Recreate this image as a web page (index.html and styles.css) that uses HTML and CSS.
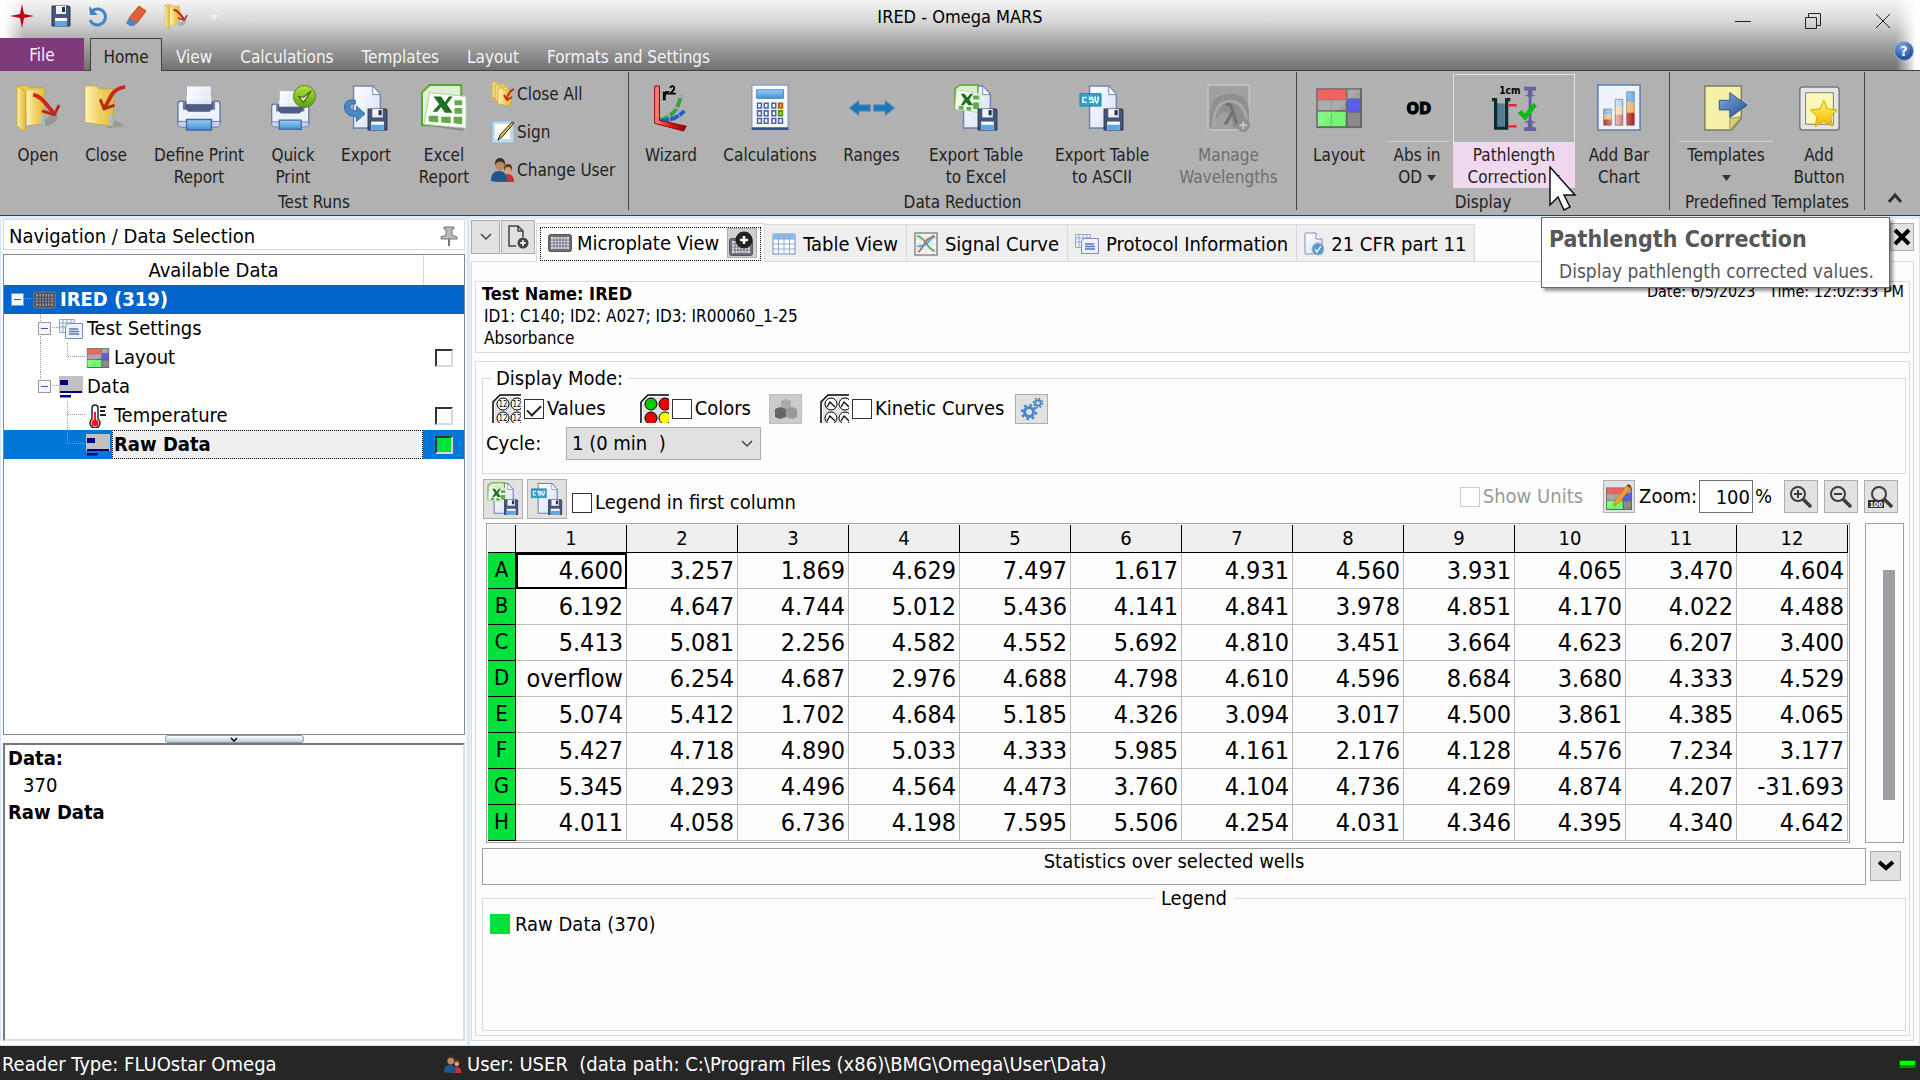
FILE: index.html
```html
<!DOCTYPE html>
<html lang="en">
<head>
<meta charset="utf-8">
<title>IRED - Omega MARS</title>
<link rel="stylesheet" href="styles.css">
</head>
<body>
<svg class="defs" aria-hidden="true">
  <defs>
    <linearGradient id="gFold" x1="0" y1="0" x2="1" y2="0"><stop offset="0" stop-color="#fff3b4"/><stop offset=".5" stop-color="#f0d268"/><stop offset="1" stop-color="#e3bd3c"/></linearGradient>
    <linearGradient id="gPaper" x1="0" y1="0" x2="1" y2="1"><stop offset="0" stop-color="#ffffff"/><stop offset="1" stop-color="#d5def0"/></linearGradient>
    <linearGradient id="gBlue" x1="0" y1="0" x2="0" y2="1"><stop offset="0" stop-color="#9fd0f4"/><stop offset="1" stop-color="#3f8fd6"/></linearGradient>
    <linearGradient id="gGreen" x1="0" y1="0" x2="0" y2="1"><stop offset="0" stop-color="#b5e33a"/><stop offset="1" stop-color="#5c9e10"/></linearGradient>
    <linearGradient id="gRed" x1="0" y1="0" x2="1" y2="0"><stop offset="0" stop-color="#ff8a80"/><stop offset=".5" stop-color="#e01818"/><stop offset="1" stop-color="#8a0505"/></linearGradient>
    <linearGradient id="gYel" x1="0" y1="0" x2="0" y2="1"><stop offset="0" stop-color="#fff26a"/><stop offset="1" stop-color="#f5b800"/></linearGradient>
    <linearGradient id="gArrow" x1="0" y1="0" x2="1" y2="1"><stop offset="0" stop-color="#7fb0e4"/><stop offset="1" stop-color="#234f8c"/></linearGradient>
    <linearGradient id="gBar" x1="0" y1="0" x2="1" y2="0"><stop offset="0" stop-color="#fff" stop-opacity=".1"/><stop offset=".4" stop-color="#fff" stop-opacity=".7"/><stop offset="1" stop-color="#fff" stop-opacity="0"/></linearGradient>
    <radialGradient id="gHelp" cx=".4" cy=".25" r=".8"><stop offset="0" stop-color="#7fa6e0"/><stop offset="1" stop-color="#123f8c"/></radialGradient>
    <symbol id="disk" viewBox="0 0 20 22"><path d="M1 1h17l1 1v19H1z" fill="#45557c" stroke="#28344f"/><path d="M5 1h10v8H5z" fill="#f0f3fa"/><path d="M11 2h3v5h-3z" fill="#28344f"/><path d="M4 13h12v8H4z" fill="#fff"/><path d="M4 16h12v5H4z" fill="#5aa7e4"/></symbol>
    <symbol id="openF" viewBox="0 0 48 50"><path d="M32 44c8-1 12-6 13-12l-6-2-8 8z" fill="#666" opacity=".35"/><path d="M2 2l11-1 3 3h15v37l-15 2z" fill="#e9c84f" stroke="#b8952e" stroke-opacity=".6"/><path d="M12 7l18-2v36l-18 2z" fill="url(#gFold)"/><path d="M2 2l9 6v40l-3 1-6-6z" fill="url(#gFold)" stroke="#c9a638"/><path d="M28 33l3-1v10l-3 1z" fill="#8ec4f0"/><path d="M19 11q7 2 12 8l9 11" fill="none" stroke="#c8271c" stroke-width="4"/><path d="M28 28l13 4 5-10" fill="none" stroke="#b02c20" stroke-width="3"/></symbol>
    <symbol id="closeF" viewBox="0 0 48 50"><path d="M24 46l20-2-10-6z" fill="#666" opacity=".35"/><path d="M2 2h12l3 3h15v17l-1 22L2 40z" fill="url(#gFold)" stroke="#b8952e" stroke-opacity=".6"/><path d="M28 32l3 1v10l-3-1z" fill="#8ec4f0"/><path d="M44 3q-9 1-14 8l-7 13" fill="none" stroke="#c8271c" stroke-width="4"/><path d="M18 16l4 10 11-4" fill="none" stroke="#b02c20" stroke-width="3"/></symbol>
    <symbol id="printer" viewBox="0 0 48 48"><path d="M11 1h26v24H11z" fill="url(#gPaper)" stroke="#9dabc9"/><path d="M2 20q0-3 3-3h3v8h32v-8h3q3 0 3 3v20H2z" fill="#eef2fa" stroke="#6478a8" stroke-width="1.5"/><path d="M9 17h30v7l-4 4H13l-4-4z" fill="#4c5c84"/><path d="M11 12h26v8H11z" fill="url(#gPaper)"/><path d="M2 38h44v3q0 3-3 3H5q-3 0-3-3z" fill="#c9d3e8" stroke="#6478a8"/><path d="M11 36h26v11H11z" fill="url(#gBlue)" stroke="#4169a8" stroke-width="1.5"/></symbol>
    <symbol id="qprint" viewBox="0 0 48 50"><g transform="translate(0 6) scale(.88)"><use href="#printer" width="48" height="48"/></g><circle cx="36" cy="13" r="11.5" fill="url(#gGreen)" stroke="#4d8510"/><path d="M30 13l5 6 8-12-8 7z" fill="#fff" stroke="#39600c" stroke-width="1.2"/></symbol>
    <symbol id="doc" viewBox="0 0 30 46"><path d="M1 1h20l8 9v35H1z" fill="url(#gPaper)" stroke="#7285b5" stroke-width="1.6"/><path d="M21 1v9h8z" fill="#fff" stroke="#7285b5"/></symbol>
    <symbol id="export" viewBox="0 0 48 50"><use href="#doc" x="8" y="1" width="34" height="46"/><path d="M13 17c-9-2-13 4-11 10 1 5 7 7 12 7v5l9-8-9-8v5c-5 0-7-2-7-5 0-2 2-3 6-2z" fill="#4a8ac4" stroke="#2e689f"/><use href="#disk" x="25" y="25" width="22" height="24"/></symbol>
    <symbol id="excel" viewBox="0 0 48 50"><path d="M10 44l34 5 2-6z" fill="#555" opacity=".4"/><path d="M9 1h33v42H1V9z" fill="#dff0d6" stroke="#58a528" stroke-width="2"/><path d="M9 9l38 4v33L3 42z" fill="#fff" stroke="#a8cf9a"/><path d="M13 13h8l4 6 4-6h4l-6 8 6 9h-8l-4-6-4 5h-5l7-8z" fill="#207020"/><path d="M35 17h8v5h-8zM35 25h8v6h-8zM34 34h9v8l-9-1zM21 34h10v7l-10-1zM8 33h10v7l-10-1z" fill="#63aa4c"/></symbol>
    <symbol id="closeAll" viewBox="0 0 24 26"><path d="M1 1h5l1 2h7v15l-13-1z" fill="#f3dc86" stroke="#cfae4a"/><path d="M4 4h5l1 2h7v15l-13-1z" fill="#f3dc86" stroke="#cfae4a"/><path d="M7 7h5l1 2h7v16l-13-2z" fill="url(#gFold)" stroke="#cfae4a"/><path d="M23 8q-5 2-7 9M13 14l3 5 5-3" fill="none" stroke="#c8271c" stroke-width="2"/></symbol>
    <symbol id="sign" viewBox="0 0 24 24"><path d="M1 1h22v22H1z" fill="#c4d8e6" stroke="#8eb4cf"/><path d="M4 4h15v15H4z" fill="#fff"/><path d="M21 2L9 15l-2 5 4-3L23 3z" fill="#e9c23c" stroke="#222"/></symbol>
    <symbol id="users" viewBox="0 0 24 26"><circle cx="17" cy="11" r="4" fill="#6b3a1c"/><circle cx="17" cy="13" r="3" fill="#d9a075"/><path d="M12 25c0-6 2-8 5-8s6 2 6 8z" fill="#d02c3c"/><circle cx="9" cy="6" r="5" fill="#3c2a20"/><circle cx="9" cy="9" r="4.5" fill="#b88a62"/><path d="M0 24c0-7 3-10 8-10s8 3 8 10q-8 2-16 0z" fill="#1d5687"/></symbol>
    <symbol id="wizard" viewBox="0 0 48 50"><path d="M12 38c14-4 20-12 22-26" fill="none" stroke="#30a53e" stroke-width="4" stroke-dasharray="10 2"/><path d="M12 38c12 1 20-4 26-10" fill="none" stroke="#1f5fd0" stroke-width="4" stroke-dasharray="10 1"/><path d="M7 2h5v36l28 6-3 5L7 41z" fill="url(#gRed)" stroke="#8a0505"/><path d="M17 17V8m0 4q1-4 5-3" fill="none" stroke="#000" stroke-width="3"/><path d="M23 4q2-3 4-1 2 2-4 7h6" fill="none" stroke="#000" stroke-width="1.8"/></symbol>
    <symbol id="calc" viewBox="0 0 48 50"><path d="M5 1h38v46H5z" fill="#f7f9fd" stroke="#8d9cc4" stroke-width="1.5"/><path d="M5 45h38v3H5z" fill="#34508f"/><path d="M10 6h28v9H10z" fill="url(#gBlue)" stroke="#4b86c0"/><g fill="#fff" stroke="#4d64a4" stroke-width="1.6"><path d="M11 20h4v5h-4zM18 20h4v5h-4zM26 20h4v5h-4zM11 28h4v5h-4zM18 28h4v5h-4zM26 28h4v5h-4zM11 36h4v5h-4zM18 36h4v5h-4zM26 36h4v5h-4zM33 36h4v5h-4z"/></g><path d="M33 20h4v5h-4z" fill="#e89a2c" stroke="#a85a08" stroke-width="1.6"/><path d="M33 28h4v5h-4z" fill="#9fd62c" stroke="#4f8a08" stroke-width="1.6"/></symbol>
    <symbol id="ranges" viewBox="0 0 48 50"><path d="M1 25l9-7v4h12v6H10v4zM47 25l-9-7v4H26v6h12v4z" fill="#1478c0" stroke="#4a7da3" stroke-width="1.2"/></symbol>
    <symbol id="xlsDisk" viewBox="0 0 48 50"><use href="#doc" x="8" y="1" width="34" height="46"/><path d="M2 5l5-4h19v26L2 26z" fill="#d8efcb" stroke="#58a528" stroke-width="1.5"/><path d="M4 6l24 4v20L2 26z" fill="#f4fbef" stroke="#c4e0b8"/><path d="M8 10h4l3 4 3-4h3l-4 6 4 6h-5l-2-3-3 3H8l4-6z" fill="#207020"/><path d="M21 12h6v4h-6zM21 19h6v7h-6zM14 24h5v4l-5-1zM6 23h5v4l-5-1z" fill="#63aa4c"/><use href="#disk" x="25" y="25" width="22" height="24"/></symbol>
    <symbol id="csvDisk" viewBox="0 0 48 50"><use href="#doc" x="8" y="1" width="34" height="46"/><path d="M1 10h22v13H1z" fill="#2fa3c8" stroke="#1c86aa"/><path d="M8 14H4v5h4M15 14h-4v2h4v3h-4M17 13v4l1.500 2.500L20 17v-4" fill="none" stroke="#fff" stroke-width="1.500"/><use href="#disk" x="25" y="25" width="22" height="24"/></symbol>
    <symbol id="waves" viewBox="0 0 48 50"><path d="M2 1h43v47H2z" fill="#a0a0a0" stroke="#bdbdbd" stroke-width="2"/><path d="M4 30Q6 10 26 10t19 24v12H28C26 26 18 22 4 46z" fill="#909090"/><path d="M8 44Q8 18 25 18t18 26" fill="none" stroke="#a8a8a8" stroke-width="3"/><path d="M21 22q5-3 6 4l5 15q1 3 3 0M28 29l-8 13" fill="none" stroke="#707070" stroke-width="3"/><circle cx="39" cy="43" r="7" fill="#8f8f8f"/><path d="M39 39v8m-4-4h8" stroke="#c8c8c8" stroke-width="2"/></symbol>
    <symbol id="plate" viewBox="0 0 48 42"><path d="M0 0h48v42H0z" fill="#666"/><path d="M2 2h29v10H2z" fill="#f94a4a"/><path d="M2 13h29v10H2z" fill="#a0a0a0"/><path d="M2 25h29v15H2z" fill="#76f476"/><path d="M33 2h13v9H33z" fill="#a0a0a0"/><path d="M33 12h13v12H33z" fill="#5c5cf2"/><path d="M33 26h13v14H33z" fill="#8a8a8a"/><path d="M16 2v38" stroke="#777" stroke-opacity=".5"/><path d="M0 0h48L0 42z" fill="#fff" opacity=".12"/></symbol>
    <symbol id="pathlen" viewBox="0 0 50 50"><path d="M5 20h10v27H5z" fill="#567a94"/><path d="M1 16h4v31h12V16h4" fill="none" stroke="#06302f" stroke-width="3.500"/><path d="M19 22h9M19 45h9" stroke="#ff1c2c" stroke-width="2.500"/><path d="M36 2h13v4h-4v5h4L43 13h-2l-5-2h4V6h-4zM41 12h3v26h-3zM36 50h13v-4h-4v-5h4l-6-3h-2l-5 3h4v5h-4z" fill="#62629c"/><path d="M31 29l6 6 11-14" fill="none" stroke="#0eb80e" stroke-width="5"/></symbol>
    <symbol id="bars" viewBox="0 0 48 50"><path d="M2 1h44v47H2z" fill="#eff3fb" stroke="#5f7bb4" stroke-width="1.600"/><path d="M8 26h8v6H8zM20 16h8v8h-8zM32 8h8v11h-8z" fill="#6aaee0"/><path d="M8 32h8v6H8zM20 24h8v9h-8zM32 19h8v12h-8z" fill="#f0b05a"/><path d="M8 37h8v6H8zM20 32h8v11h-8zM32 30h8v13h-8z" fill="#b81e10"/><path d="M8 26h8v17H8zM20 16h8v27h-8zM32 8h8v35h-8z" fill="url(#gBar)" stroke="#555" stroke-opacity=".5"/></symbol>
    <symbol id="tmpl" viewBox="0 0 48 50"><path d="M2 2h38v34l-10 12H2z" fill="#f4f0a8" stroke="#7c7c66" stroke-width="1.500"/><path d="M40 34l-12 2 0 12z" fill="#d8d078" stroke="#9a965a"/><path d="M17 17h11V9l18 13-18 13v-8H17z" fill="url(#gArrow)" stroke="#2d5184"/></symbol>
    <symbol id="addBtn" viewBox="0 0 48 50"><rect x="4" y="3" width="41" height="45" rx="3" fill="#e6e6e6" stroke="#777" stroke-width="1.500"/><path d="M10 9h29v33H10z" fill="#fbf7b4" stroke="#777"/><path d="M29 17l4 9 10 1-7 7 2 10-9-5-9 5 2-10-7-7 10-1z" fill="url(#gYel)" stroke="#dfa000"/></symbol>
    <symbol id="grid" viewBox="0 0 24 18"><rect x=".5" y=".5" width="23" height="17" rx="2" fill="#55565e" stroke="#77787c"/><path d="M3 3h18v12H3z" fill="#8f93a8"/><path d="M6 3v12M9 3v12M12 3v12M15 3v12M18 3v12M3 6h18M3 9h18M3 12h18" stroke="#3e3f48"/></symbol>
    <symbol id="gridL" viewBox="0 0 24 18"><rect x=".5" y=".5" width="23" height="17" rx="2" fill="#6d6d75" stroke="#55555a"/><path d="M3 3h18v12H3z" fill="#dfe0ea"/><path d="M6 3v12M9 3v12M12 3v12M15 3v12M18 3v12M3 6h18M3 9h18M3 12h18" stroke="#70707c"/></symbol>
    <symbol id="proto" viewBox="0 0 24 20"><path d="M.5.500h15v13H.500z" fill="#f4f6fc" stroke="#9aa5cc"/><path d="M4 0v13M8 0v13M12 0v13M0 4h15M0 8h15" stroke="#9aa5cc"/><path d="M6.500 6.500l3-2h14v15h-17z" fill="#eef2fb" stroke="#7c8bbc"/><path d="M10 10h9M10 12.500h10M10 15h10" stroke="#5a74b8" stroke-width="1.500"/></symbol>
    <symbol id="dataI" viewBox="0 0 24 22"><path d="M0 0h24v17H0z" fill="#c0c0c0"/><path d="M1 4h8v5H1zM1 15h22v2H1zM1 19h11v2.500H1z" fill="#00007c"/></symbol>
    <symbol id="thermo" viewBox="0 0 18 24"><path d="M3 4a3 3 0 0 1 6 0v11a5 5 0 1 1-6 0z" fill="#fff" stroke="#222" stroke-width="1.500"/><path d="M6 8v10" stroke="#f01818" stroke-width="2"/><circle cx="6" cy="19" r="3.500" fill="#f01818"/><path d="M11 3h6M11 7h5M11 11h6" stroke="#222" stroke-width="2"/></symbol>
    <symbol id="tableI" viewBox="0 0 24 22"><path d="M1 1h22v20H1z" fill="#fff" stroke="#6b8fc4"/><path d="M1 1h22v5H1z" fill="#86bfe8"/><path d="M6.500 1v20M12 1v20M17.500 1v20M1 6h22M1 11h22M1 16h22" stroke="#8fa8d4"/></symbol>
    <symbol id="curve" viewBox="0 0 24 24"><path d="M1 1h22v22H1z" fill="#f6f6f6" stroke="#8a8a8a" stroke-width="1.500"/><path d="M6 2v20M12 2v20M18 2v20M2 7h20M2 12h20M2 17h20" stroke="#ddd"/><path d="M3 4c8 0 10 14 18 15" fill="none" stroke="#5bb55b" stroke-width="1.800"/><path d="M4 20C10 18 10 4 21 5" fill="none" stroke="#e05050" stroke-width="1.800"/><path d="M3 14c8 2 12-4 17-11" fill="none" stroke="#4a9cd8" stroke-width="1.800"/></symbol>
    <symbol id="docOk" viewBox="0 0 20 24"><path d="M1 1h11l6 6v15H1z" fill="url(#gPaper)" stroke="#8592b8"/><path d="M12 1v6h6" fill="#fff" stroke="#8592b8"/><circle cx="14" cy="17" r="6" fill="#5a9ac8" stroke="#9bb8cc"/><path d="M11 17l2 3 4-6" fill="none" stroke="#fff" stroke-width="1.300"/></symbol>
    <symbol id="wellBase" viewBox="0 0 29 29"><path d="M1 29V8l7-7h21" fill="none" stroke="#000" stroke-width="1.500"/><path d="M3 29V9l6-6h20v26z" fill="#e2e2e2"/></symbol>
    <symbol id="undo" viewBox="0 0 20 22"><path d="M4 6a8 8 0 1 1-2 9" fill="none" stroke="#3f86c6" stroke-width="3"/><path d="M1 1l1 9h8z" fill="#3f86c6"/></symbol>
    <symbol id="mag" viewBox="0 0 24 24"><circle cx="9" cy="9" r="7" fill="none" stroke="#3e3e3e" stroke-width="2"/><path d="M14 14l8 8" stroke="#3e3e3e" stroke-width="3.500"/></symbol>
  </defs>
</svg>

<div class="app">
  <header class="chrome">
    <div class="titlebar">
      <div class="quick">
        <svg width="24" height="24" viewBox="0 0 24 24"><path d="M12 0l2 10 10 2-10 2-2 10-2-10-10-2 10-2z" fill="#c00010"/></svg>
        <button aria-label="Save"><svg width="20" height="22"><use href="#disk"/></svg></button>
        <button aria-label="Undo"><svg width="20" height="22"><use href="#undo"/></svg></button>
        <button aria-label="Clear"><svg width="22" height="22" viewBox="0 0 22 22"><path d="M14 1l7 5-9 12-8-5z" fill="#e0603c" stroke="#c44a28"/><path d="M4 13l8 5-3 3H5l-4-3z" fill="#4d86c0"/></svg></button>
        <button aria-label="Open"><svg width="24" height="25"><use href="#openF"/></svg></button>
        <button aria-label="Customize" class="quick-more"><svg width="10" height="12" viewBox="0 0 10 12"><path d="M0 1h10M1 5h8l-4 5z" fill="#eee" stroke="#eee"/></svg></button>
      </div>
      <h1 class="title">IRED - Omega MARS</h1>
      <div class="win">
        <button aria-label="Minimize"><svg width="16" height="16"><path d="M0 8.500h16" stroke="#222"/></svg></button>
        <button aria-label="Restore"><svg width="16" height="16"><path d="M.5 4.500h11v11H.500zM3.500 4V.500h12v12H12" fill="none" stroke="#222"/></svg></button>
        <button aria-label="Close window"><svg width="16" height="16"><path d="M1 1l14 14M15 1L1 15" stroke="#222"/></svg></button>
      </div>
    </div>
    <nav class="menu">
      <button class="file">File</button>
      <button class="active">Home</button>
      <button>View</button>
      <button>Calculations</button>
      <button>Templates</button>
      <button>Layout</button>
      <button>Formats and Settings</button>
      <button class="help" aria-label="Help"><svg width="20" height="20" viewBox="0 0 20 20"><circle cx="10" cy="10" r="9.500" fill="url(#gHelp)" stroke="#9ab4dc"/><text x="10" y="15" text-anchor="middle" font-size="14" font-weight="bold" fill="#fff">?</text></svg></button>
    </nav>
  </header>

  <section class="ribbon" aria-label="Home">
    <div class="group runs">
      <div class="items">
        <button class="big"><svg><use href="#openF"/></svg>Open</button>
        <button class="big"><svg><use href="#closeF"/></svg>Close</button>
        <button class="big"><svg><use href="#printer"/></svg>Define Print<br>Report</button>
        <button class="big"><svg><use href="#qprint"/></svg>Quick<br>Print</button>
        <button class="big"><svg><use href="#export"/></svg>Export</button>
        <button class="big"><svg><use href="#excel"/></svg>Excel<br>Report</button>
        <div class="smalls">
          <button><svg><use href="#closeAll"/></svg>Close All</button>
          <button><svg><use href="#sign"/></svg>Sign</button>
          <button><svg><use href="#users"/></svg>Change User</button>
        </div>
      </div>
      <h2>Test Runs</h2>
    </div>
    <div class="group reduction">
      <div class="items">
        <button class="big"><svg><use href="#wizard"/></svg>Wizard</button>
        <button class="big"><svg><use href="#calc"/></svg>Calculations</button>
        <button class="big"><svg><use href="#ranges"/></svg>Ranges</button>
        <button class="big"><svg><use href="#xlsDisk"/></svg>Export Table<br>to Excel</button>
        <button class="big"><svg><use href="#csvDisk"/></svg>Export Table<br>to ASCII</button>
        <button class="big" disabled><svg><use href="#waves"/></svg>Manage<br>Wavelengths</button>
      </div>
      <h2>Data Reduction</h2>
    </div>
    <div class="group display">
      <div class="items">
        <button class="big"><svg viewBox="0 0 48 50"><use href="#plate" y="4" width="48" height="42"/></svg>Layout</button>
        <button class="big split"><svg viewBox="0 0 48 50"><text x="26" y="31" text-anchor="middle" font-size="17" font-weight="bold" stroke="#000" stroke-width="1">OD</text></svg>Abs in<br><span>OD <svg class="drop" viewBox="0 0 9 6"><path d="M0 0h9L4.500 6z"/></svg></span></button>
        <div class="hover-wrap">
          <button class="big hot" aria-describedby="tip"><svg viewBox="0 0 50 50"><use href="#pathlen"/><text x="9" y="10" font-size="11" font-weight="bold">1cm</text></svg><span class="hot-label">Pathlength<br>Correction <svg class="drop" viewBox="0 0 9 6"><path d="M0 0h9L4.500 6z"/></svg></span></button>
          <div class="tip" role="tooltip" id="tip"><strong>Pathlength Correction</strong><p>Display pathlength corrected values.</p></div>
          <svg class="cursor" width="28" height="46" viewBox="0 0 28 46"><path d="M1 1v38l8-8 6 13 6-3-6-12h11z" fill="#fff" stroke="#111" stroke-width="1.500"/></svg>
        </div>
        <button class="big"><svg><use href="#bars"/></svg>Add Bar<br>Chart</button>
      </div>
      <h2>Display</h2>
    </div>
    <div class="group predefined">
      <div class="items">
        <button class="big split"><svg><use href="#tmpl"/></svg>Templates<br><span><svg class="drop" viewBox="0 0 9 6"><path d="M0 0h9L4.500 6z"/></svg></span></button>
        <button class="big"><svg><use href="#addBtn"/></svg>Add<br>Button</button>
      </div>
      <h2>Predefined Templates</h2>
    </div>
    <button class="collapse" aria-label="Collapse ribbon"><svg width="14" height="12"><path d="M1 10l6-7 6 7" fill="none" stroke="#333" stroke-width="3"/></svg></button>
  </section>

  <main class="work">
    <aside class="side">
      <div class="side-head"><h2>Navigation / Data Selection</h2><button aria-label="Pin"><svg width="18" height="20" viewBox="0 0 18 20"><path d="M4 1h10v2h-2v6l5 2v2H1v-2l5-2V3H4z" fill="#bbb" stroke="#777"/><path d="M9 13v7" stroke="#777" stroke-width="2"/></svg></button></div>
      <div class="tree">
        <div class="tree-cols"><span>Available Data</span><i></i></div>
        <div class="node root"><button class="twig w1" aria-label="Collapse IRED"><svg width="29" height="29"><path d="M21 13.500h8" class="dots"/><path d="M7.500 8.500h12v12h-12z" class="box"/><path d="M10 14.500h7" class="minus"/></svg></button><svg width="23" height="18"><use href="#grid"/></svg><span class="label">IRED (319)</span></div>
        <div class="node"><button class="twig w2" aria-label="Collapse Test Settings"><svg width="55" height="29"><path d="M36.500 0v29M48 13.500h7" class="dots"/><path d="M34.500 8.500h12v12h-12z" class="box"/><path d="M37 14.500h7" class="minus"/></svg></button><svg width="24" height="20"><use href="#proto"/></svg><span class="label">Test Settings</span></div>
        <div class="node"><svg width="82" height="29"><path d="M36.500 0v29M63.500 0v13.500h18" class="dots"/></svg><svg width="24" height="20" viewBox="0 0 48 42"><use href="#plate"/></svg><label class="label" for="n1">Layout</label><span class="tick"><input type="checkbox" id="n1"></span></div>
        <div class="node"><button class="twig w2" aria-label="Collapse Data"><svg width="55" height="29"><path d="M36.500 0v8M48 13.500h7" class="dots"/><path d="M34.500 8.500h12v12h-12z" class="box"/><path d="M37 14.500h7" class="minus"/></svg></button><svg width="24" height="22"><use href="#dataI"/></svg><span class="label">Data</span></div>
        <div class="node"><svg width="82" height="29"><path d="M63.500 0v29M64 13.500h18" class="dots"/></svg><svg width="24" height="24"><use href="#thermo"/></svg><label class="label" for="n2">Temperature</label><span class="tick"><input type="checkbox" id="n2"></span></div>
        <div class="node current"><svg width="82" height="29"><path d="M63.500 0v13.500h18" class="dots"/></svg><svg width="24" height="22"><use href="#dataI"/></svg><label class="label" for="n3">Raw Data</label><span class="tick"><input type="checkbox" id="n3" class="green" checked></span></div>
      </div>
      <button class="splitter" aria-label="Toggle details"><svg width="8" height="5"><path d="M1 1l3 3 3-3" fill="none" stroke="#000" stroke-width="1.500"/></svg></button>
      <div class="info"><b>Data:</b><p>370</p><b>Raw Data</b></div>
    </aside>

    <section class="view">
      <div class="tabs">
        <button class="sq narrow" aria-label="Tab list"><svg width="12" height="8"><path d="M1 1l5 5 5-5" fill="none" stroke="#444" stroke-width="1.500"/></svg></button>
        <button class="sq" aria-label="New view"><svg width="22" height="24" viewBox="0 0 22 24"><path d="M9 21H2V1h9l5 5v6M11 1v5h5" fill="none" stroke="#444" stroke-width="1.500"/><circle cx="16" cy="18" r="5.500" fill="#444"/><path d="M16 15v6m-3-3h6" stroke="#fff" stroke-width="1.500"/></svg></button>
        <div class="tab on"><button class="tab-name"><svg width="24" height="18"><use href="#gridL"/></svg>Microplate View</button><button class="plus" aria-label="Add microplate view"><svg width="26" height="26" viewBox="0 0 26 26"><g transform="translate(0 8)"><use href="#gridL" width="24" height="18"/></g><circle cx="15" cy="10" r="8.500" fill="#222"/><path d="M15 6v8m-4-4h8" stroke="#fff" stroke-width="2.500"/></svg></button></div>
        <button class="tab"><svg width="24" height="22"><use href="#tableI"/></svg>Table View</button>
        <button class="tab"><svg width="24" height="24"><use href="#curve"/></svg>Signal Curve</button>
        <button class="tab"><svg width="24" height="20"><use href="#proto"/></svg>Protocol Information</button>
        <button class="tab"><svg width="20" height="24"><use href="#docOk"/></svg>21 CFR part 11</button>
        <button class="sq shut" aria-label="Close tab"><svg width="18" height="18"><path d="M2 2l14 14M16 2L2 16" stroke="#000" stroke-width="4"/></svg></button>
      </div>
      <div class="panel">
        <div class="test">
          <h2>Test Name: IRED</h2>
          <p>ID1: C140; ID2: A027; ID3: IR00060_1-25</p>
          <p>Absorbance</p>
          <span class="stamp">Date: 6/5/2023 &nbsp; Time: 12:02:33 PM</span>
        </div>
        <div class="content">
          <fieldset class="mode">
            <legend>Display Mode:</legend>
            <div class="mode-row">
              <svg width="29" height="29" viewBox="0 0 29 29"><use href="#wellBase"/><g fill="#fff" stroke="#000"><circle cx="11" cy="10" r="6"/><circle cx="25" cy="10" r="6"/><circle cx="11" cy="24" r="6"/><circle cx="25" cy="24" r="6"/></g><g font-size="8" text-anchor="middle"><text x="11" y="13">12</text><text x="25" y="13">12</text><text x="11" y="27">12</text><text x="25" y="27">12</text></g></svg>
              <label><input type="checkbox" class="box20" checked>Values</label>
              <svg class="g-colors" width="29" height="29" viewBox="0 0 29 29"><use href="#wellBase"/><g stroke="#000"><circle cx="11" cy="10" r="6" fill="#0c0"/><circle cx="25" cy="10" r="6" fill="#e00"/><circle cx="11" cy="24" r="6" fill="#e00"/><circle cx="25" cy="24" r="6" fill="#ff0"/></g></svg>
              <label><input type="checkbox" class="box20">Colors</label>
              <button class="sq cubes" disabled aria-label="Color settings"><svg width="24" height="22" viewBox="0 0 24 22"><path d="M7 3l5-2 5 2v7l-5 2-5-2z" fill="#aaa"/><path d="M1 11l5-2 6 2v8l-6 2-5-2z" fill="#666"/><path d="M12 11l6-2 5 2v8l-5 2-6-2z" fill="#999"/></svg></button>
              <svg width="29" height="29" viewBox="0 0 29 29"><use href="#wellBase"/><g fill="#fff" stroke="#000"><circle cx="11" cy="10" r="6"/><circle cx="25" cy="10" r="6"/><circle cx="11" cy="24" r="6"/><circle cx="25" cy="24" r="6"/></g><path d="M7 13l3-5 5 5M21 13l3-5 5 5M7 27l3-5 5 5M21 27l3-5 5 5" fill="none" stroke="#000" stroke-width="1.300"/></svg>
              <label><input type="checkbox" class="box20">Kinetic Curves</label>
              <button class="sq gears" aria-label="Curve settings"><svg width="24" height="24" viewBox="0 0 24 24"><g fill="none" stroke="#4a86c4"><circle cx="9" cy="15" r="4.500" stroke-width="3"/><circle cx="9" cy="15" r="7" stroke-width="2.500" stroke-dasharray="2.700 2.800"/><circle cx="18" cy="6" r="2.800" stroke-width="2"/><circle cx="18" cy="6" r="4.600" stroke-width="1.600" stroke-dasharray="1.800 1.800"/></g></svg></button>
            </div>
            <div class="cycle">
              <label for="cycle">Cycle:</label>
              <span class="drop-wrap"><select id="cycle"><option>1 (0 min&nbsp;&nbsp;)</option></select><svg width="12" height="8"><path d="M1 1l5 5 5-5" fill="none" stroke="#444" stroke-width="1.500"/></svg></span>
            </div>
          </fieldset>
          <div class="tools">
            <button class="sq xl" aria-label="Export table to Excel"><svg width="34" height="34"><use href="#xlsDisk"/></svg></button>
            <button class="sq xl" aria-label="Export table to ASCII"><svg width="34" height="34"><use href="#csvDisk"/></svg></button>
            <label class="first-col"><input type="checkbox" class="box20">Legend in first column</label>
            <div class="tools-right">
              <label class="off"><input type="checkbox" class="box20" disabled>Show Units</label>
              <button class="sq edit" aria-label="Edit layout"><svg width="26" height="26" viewBox="0 0 48 48"><use href="#plate" y="6" width="48" height="42"/><path d="M38 3l7 5-22 28-9 4 3-10z" fill="#f0a030" stroke="#a86818"/><path d="M38 3l7 5 2-4-5-4z" fill="#8c3c1c"/></svg></button>
              <label for="zoom">Zoom:</label>
              <input type="text" id="zoom" value="100">
              <span class="pct">%</span>
              <button class="sq" aria-label="Zoom in"><svg width="24" height="24"><use href="#mag"/><path d="M9 5v8m-4-4h8" stroke="#3e3e3e" stroke-width="2"/></svg></button>
              <button class="sq" aria-label="Zoom out"><svg width="24" height="24"><use href="#mag"/><path d="M5 9h8" stroke="#3e3e3e" stroke-width="2"/></svg></button>
              <button class="sq" aria-label="Zoom to 100 percent"><svg width="26" height="24"><use href="#mag" x="2" width="24" height="24"/><path d="M0 15h16v8H0z" fill="#333"/><text x="8" y="22" text-anchor="middle" font-size="7" font-weight="bold" fill="#fff">100</text></svg></button>
            </div>
          </div>
          <div class="plate-row">
            <div class="plate">
              <table>
                <colgroup><col class="rowhead"></colgroup>
                <thead><tr><th></th><th>1</th><th>2</th><th>3</th><th>4</th><th>5</th><th>6</th><th>7</th><th>8</th><th>9</th><th>10</th><th>11</th><th>12</th></tr></thead>
                <tbody>
                  <tr><th>A</th><td class="sel">4.600</td><td>3.257</td><td>1.869</td><td>4.629</td><td>7.497</td><td>1.617</td><td>4.931</td><td>4.560</td><td>3.931</td><td>4.065</td><td>3.470</td><td>4.604</td></tr>
                  <tr><th>B</th><td>6.192</td><td>4.647</td><td>4.744</td><td>5.012</td><td>5.436</td><td>4.141</td><td>4.841</td><td>3.978</td><td>4.851</td><td>4.170</td><td>4.022</td><td>4.488</td></tr>
                  <tr><th>C</th><td>5.413</td><td>5.081</td><td>2.256</td><td>4.582</td><td>4.552</td><td>5.692</td><td>4.810</td><td>3.451</td><td>3.664</td><td>4.623</td><td>6.207</td><td>3.400</td></tr>
                  <tr><th>D</th><td>overflow</td><td>6.254</td><td>4.687</td><td>2.976</td><td>4.688</td><td>4.798</td><td>4.610</td><td>4.596</td><td>8.684</td><td>3.680</td><td>4.333</td><td>4.529</td></tr>
                  <tr><th>E</th><td>5.074</td><td>5.412</td><td>1.702</td><td>4.684</td><td>5.185</td><td>4.326</td><td>3.094</td><td>3.017</td><td>4.500</td><td>3.861</td><td>4.385</td><td>4.065</td></tr>
                  <tr><th>F</th><td>5.427</td><td>4.718</td><td>4.890</td><td>5.033</td><td>4.333</td><td>5.985</td><td>4.161</td><td>2.176</td><td>4.128</td><td>4.576</td><td>7.234</td><td>3.177</td></tr>
                  <tr><th>G</th><td>5.345</td><td>4.293</td><td>4.496</td><td>4.564</td><td>4.473</td><td>3.760</td><td>4.104</td><td>4.736</td><td>4.269</td><td>4.874</td><td>4.207</td><td>-31.693</td></tr>
                  <tr><th>H</th><td>4.011</td><td>4.058</td><td>6.736</td><td>4.198</td><td>7.595</td><td>5.506</td><td>4.254</td><td>4.031</td><td>4.346</td><td>4.395</td><td>4.340</td><td>4.642</td></tr>
                </tbody>
              </table>
            </div>
            <div class="scroll"><i></i></div>
          </div>
          <div class="stats"><div class="stats-box">Statistics over selected wells</div><button class="sq" aria-label="Expand statistics"><svg width="16" height="12"><path d="M1 2l7 6 7-6" fill="none" stroke="#000" stroke-width="4"/></svg></button></div>
          <fieldset class="legend">
            <legend>Legend</legend>
            <div class="key"><i></i>Raw Data (370)</div>
          </fieldset>
        </div>
      </div>
    </section>
  </main>

  <footer class="status">
    <span class="reader">Reader Type: FLUOstar Omega</span>
    <svg width="18" height="20"><use href="#users"/></svg>
    <span>User: USER &nbsp;(data path: C:\Program Files (x86)\BMG\Omega\User\Data)</span>
    <i class="led"></i>
  </footer>
</div>
</body>
</html>
```

FILE: styles.css
```css
* { box-sizing: border-box; }
body { margin: 0; font: 20px/27px "DejaVu Sans Condensed", "DejaVu Sans", sans-serif; color: #000; }
button, input, select { font: inherit; color: inherit; margin: 0; }
button { padding: 0; border: 0; background: none; white-space: nowrap; }
h1, h2, p { margin: 0; font-size: inherit; font-weight: normal; }
svg { flex: none; display: block; }
.defs { position: absolute; width: 0; height: 0; }
.app { min-height: 100vh; display: flex; flex-direction: column; background: #fdfdfd; }

/* title bar and menu */
.chrome {
  font-size: 17px;
  background:
    linear-gradient(to right, #fff 4px, rgba(255,255,255,0) 24px) left top / 24px 38px no-repeat,
    linear-gradient(to left, #fff 4px, rgba(255,255,255,0) 24px) right top / 24px 70px no-repeat,
    linear-gradient(#f5f5f5, #d8d8d8 30%, #a8a8a8 60%, #707070);
  border-bottom: 1px solid #404040;
}
.titlebar { height: 38px; display: grid; grid-template-columns: 1fr auto 1fr; }
.quick { display: flex; align-items: center; padding: 0 0 6px 10px; gap: 17px; }
.quick-more { margin-left: 4px; }
.title { font-size: 18px; line-height: 34px; }
.win { display: flex; justify-content: flex-end; padding: 4px 2px 0 0; }
.win button { width: 70px; display: grid; place-items: center; }
.menu { height: 32px; display: flex; color: #f4f4f4; }
.menu button { padding: 5px 14px 0; height: 33px; }
.menu .file { width: 84px; background: #80397b; margin-right: 6px; padding: 1px 0 0; }
.menu .active { width: 72px; padding: 5px 0 0; background: #b1b1b1; color: #222; border: solid #404040; border-width: 1px 1px 0; }
.menu .help { margin-left: auto; padding: 0 6px 8px; }

/* ribbon */
.ribbon { display: flex; background: #b1b1b1; height: 145px; border-bottom: 1px solid #404040; color: #222; font-size: 17px; line-height: 22px; }
.group { border-right: 1px solid #444; height: 138px; margin-top: 1px; padding-top: 2px; display: flex; flex-direction: column; }
.group h2 { text-align: center; line-height: 28px; }
.items { display: grid; height: 115px; }
.runs .items { grid-template-columns: 68px 68px 118px 70px 76px 80px 144px; padding-left: 4px; }
.reduction .items { grid-template-columns: 70px 128px 75px 134px 118px 135px; padding-left: 7px; }
.display .items { grid-template-columns: 84px 72px 122px 88px; padding-right: 6px; }
.predefined .items { grid-template-columns: 100px 86px; padding: 0 2px 0 6px; }
.big { display: flex; flex-direction: column; align-items: center; padding-top: 10px; }
.big > svg { width: 46px; height: 48px; margin-bottom: 12px; }
.big:disabled { color: #6e6e6e; }
.drop { display: inline-block; width: 9px; height: 6px; vertical-align: middle; fill: #333; }
.split { background: linear-gradient(#d0d0d0, #d0d0d0) center 67px / 64px 1px no-repeat; }
.predefined .split { background-size: 94px 1px; }
.hover-wrap { position: relative; }
.hot { width: 100%; height: 114px; padding-top: 9px; border: 1px solid #f0d9ee; }
.hot > svg { margin-bottom: 10px; }
.hot-label { background: #f0d9ee; align-self: stretch; height: 46px; padding-top: 2px; }
.tip { position: absolute; z-index: 2; left: 88px; top: 143px; width: 349px; height: 71px; padding: 6px 0 0 7px; background: #fff; border: 1px solid #666; box-shadow: 3px 3px 3px rgba(0,0,0,.4); color: #575757; }
.tip strong { display: block; font-size: 23px; line-height: 30px; white-space: nowrap; }
.tip p { font-size: 19px; line-height: 34px; padding-left: 10px; white-space: nowrap; }
.cursor { position: absolute; z-index: 3; left: 96px; top: 92px; }
.smalls { display: flex; flex-direction: column; }
.smalls button { height: 38px; display: flex; align-items: center; gap: 2px; padding: 1px 0 0 7px; text-align: left; }
.smalls svg { width: 24px; height: 26px; }
.collapse { margin-left: auto; padding: 110px 18px 0 0; }

/* work area */
.work { flex: 1; display: grid; grid-template-columns: 466px minmax(0, 1fr); gap: 5px; padding: 3px 5px 4px 0; background: linear-gradient(to right, transparent 466px, #d8ebfb 467px, #d8ebfb 470px, transparent 471px), linear-gradient(#dceefc, #dceefc) top / 100% 3px no-repeat; border-right: 1px solid #cfe6fa; border-bottom: 1px solid #cfe6fa; }
.side { display: flex; flex-direction: column; padding: 0 1px 0 2px; border-left: 1px solid #cfe6fa; }
.side-head { height: 31px; display: flex; justify-content: space-between; align-items: center; border: 1px solid #d9d9d9; padding: 3px 6px 0 5px; background: #fff; margin-bottom: 4px; }
.tree { height: 481px; border: 1px solid #828790; background: #fff; }
.tree-cols { display: grid; grid-template-columns: 1fr 41px; text-align: center; line-height: 30px; }
.tree-cols i { border-left: 1px solid #d9d9d9; }
.node { height: 29px; display: flex; align-items: center; line-height: 29px; }
.twig { height: 29px; }
.label { flex: 1; padding-left: 4px; height: 29px; }
.node.root { background: #0066cc; color: #fff; font-weight: bold; }
.node.current { background: #0078d7; font-weight: bold; }
.current .label { background: #efefef; border: 1px dotted #000; line-height: 27px; margin-left: 2px; padding-left: 1px; }
.dots { fill: none; stroke: #999; stroke-dasharray: 1 1; }
.box { fill: #f6f6f6; stroke: #999; }
.minus { stroke: #3a5aa8; }
.tick { width: 41px; display: grid; place-items: center; }
.tick input { appearance: none; width: 18px; height: 18px; background: #fff; border: 2px solid; border-color: #333 #d8d8d8 #d8d8d8 #333; }
.tick .green { background: #00e13c; }
.splitter { width: 139px; height: 8px; margin: 0 auto; border: 1px solid #999; border-radius: 3px; background: linear-gradient(#fff, #b4cfdf); display: grid; place-items: center; }
.info { flex: 1; border: 2px solid; border-color: #777 #ddd #ddd #777; padding: 0 3px; background: #fff; }
.info p { padding-left: 15px; }

/* tab strip */
.view { display: flex; flex-direction: column; }
.tabs { height: 42px; display: flex; align-items: flex-end; }
.sq { background: #e1e1e1; border: 1px solid #adadad; width: 34px; height: 33px; display: grid; place-items: center; }
.tabs .sq { align-self: flex-start; margin: 1px 1px 0 0; height: 34px; }
.tabs .narrow { width: 29px; }
.tab { height: 37px; display: flex; align-items: center; gap: 7px; padding: 2px 8px 0 7px; background: #efefef; border: 1px solid #d9d9d9; border-width: 1px 1px 0 0; }
.tab.on { position: relative; background: #fff; height: 39px; padding: 0 7px 0 11px; gap: 8px; border-left-width: 1px; margin-bottom: -1px; z-index: 1; }
.tab.on::before { content: ""; position: absolute; inset: 3px 3px 1px; border: 1px dotted #000; pointer-events: none; }
.tab-name { display: flex; align-items: center; gap: 5px; }
.plus { width: 30px; height: 30px; background: #d0d0d0; border: 1px solid #adadad; display: grid; place-items: center; }
.tabs .shut { width: 24px; height: 28px; margin: 4px 0 0 auto; }

/* test panel */
.panel { flex: 1; display: flex; flex-direction: column; border: 1px solid #d9d9d9; padding: 19px 3px 4px; }
.test { position: relative; height: 72px; border: 1px solid #d9d9d9; padding: 0 6px; margin-bottom: 8px; font-size: 17px; line-height: 22px; }
.test h2 { font-weight: bold; font-size: 18px; line-height: 23px; }
.test p { padding-left: 2px; }
.stamp { position: absolute; right: 5px; top: -1px; font-size: 16px; }
.content { flex: 1; display: flex; flex-direction: column; border: 1px solid #d9d9d9; padding: 3px 3px 4px 6px; }
fieldset { margin: 0; border: 1px solid #d9d9d9; min-inline-size: 0; }
.mode { height: 109px; padding: 0 10px 0 3px; }
.mode legend { margin-left: 5px; padding: 0 5px; }
.mode-row { display: flex; align-items: center; height: 33px; padding-left: 6px; }
.content label { display: flex; align-items: center; gap: 3px; white-space: nowrap; }
.mode-row label { margin-left: 3px; }
.box20 { appearance: none; width: 20px; height: 20px; border: 1px solid #333; background: #fff; display: grid; place-items: center; }
.box20:checked::before { content: ""; width: 6px; height: 12px; border: solid #222; border-width: 0 2px 2px 0; transform: rotate(45deg); }
.box20:disabled { border-color: #ccc; }
.mode-row .g-colors { margin-left: 34px; }
.mode-row .sq { width: 33px; height: 30px; }
.mode-row .cubes { margin: 0 18px; background: #ccc; border-color: #bfbfbf; }
.mode-row .gears { margin-left: 11px; }
.cycle { display: flex; align-items: center; margin-top: 2px; }
.cycle label { width: 80px; }
.drop-wrap { position: relative; width: 195px; }
.drop-wrap select { appearance: none; width: 100%; height: 33px; border: 1px solid #adadad; border-radius: 0; background: #e1e1e1; padding: 0 5px; }
.drop-wrap svg { position: absolute; right: 8px; top: 13px; }
.tools { display: flex; height: 49px; padding: 5px 0 0 1px; }
.tools .xl { width: 40px; height: 40px; margin-right: 4px; }
.tools .first-col { height: 40px; padding: 7px 0 0 1px; }
.tools-right { margin-left: auto; padding-right: 8px; display: flex; height: 35px; align-items: center; }
.tools-right .off { color: #9a9a9a; margin-right: 20px; }
.tools-right .edit { width: 32px; margin-right: 4px; }
.tools-right input[type=text] { width: 54px; height: 33px; border: 1px solid #707070; text-align: right; padding: 0 2px; margin-left: 2px; }
.pct { width: 31px; padding-left: 2px; }
.tools-right .sq + .sq { margin-left: 6px; }

/* plate */
.plate-row { display: flex; padding: 0 2px 0 4px; gap: 15px; }
.plate { flex: 1; border: 1px solid #a0a0a0; padding: 1px; }
table { width: 100%; table-layout: fixed; border-collapse: separate; border-spacing: 0; }
.rowhead { width: 28px; }
th { font-weight: normal; padding: 0; text-align: center; }
thead th { height: 28px; background: #efefef; font-size: 20px; border: solid #000; border-width: 0 1px 1px 0; }
tbody th { background: #00e13c; font-size: 22px; line-height: 27px; border: solid #000; border-width: 0 1px 1px 0; padding-bottom: 2px; }
td { height: 36px; font-size: 25px; line-height: 34px; text-align: right; padding: 0 3px 0 0; border: solid #bbb; border-width: 0 1px 1px 0; }
.sel { outline: 2px solid #000; outline-offset: -2px; }
.scroll { width: 39px; border: 1px solid #a0a0a0; padding: 46px 8px 42px 17px; display: flex; }
.scroll i { flex: 1; background: #9e9ea4; }
.stats { display: flex; align-items: flex-start; margin-top: 5px; gap: 4px; }
.stats-box { flex: 1; height: 37px; border: 1px solid #a0a0a0; text-align: center; line-height: 25px; }
.stats .sq { width: 31px; height: 30px; margin: 3px 5px 0 0; }
.legend { flex: 1; padding: 0 7px; }
.legend legend { margin: 0 auto; padding: 0 7px; }
.key { display: flex; align-items: center; gap: 5px; line-height: 24px; }
.key i { width: 20px; height: 20px; background: #00e13c; }

/* status bar */
.status { height: 34px; background: #262626; color: #fff; display: flex; align-items: center; padding: 2px 4px 0 2px; gap: 5px; white-space: nowrap; }
.reader { width: 437px; }
.led { width: 17px; height: 8px; margin-left: auto; background: #00ff00; border: 1px solid #006a00; border-bottom: 3px solid #008c00; }
```
